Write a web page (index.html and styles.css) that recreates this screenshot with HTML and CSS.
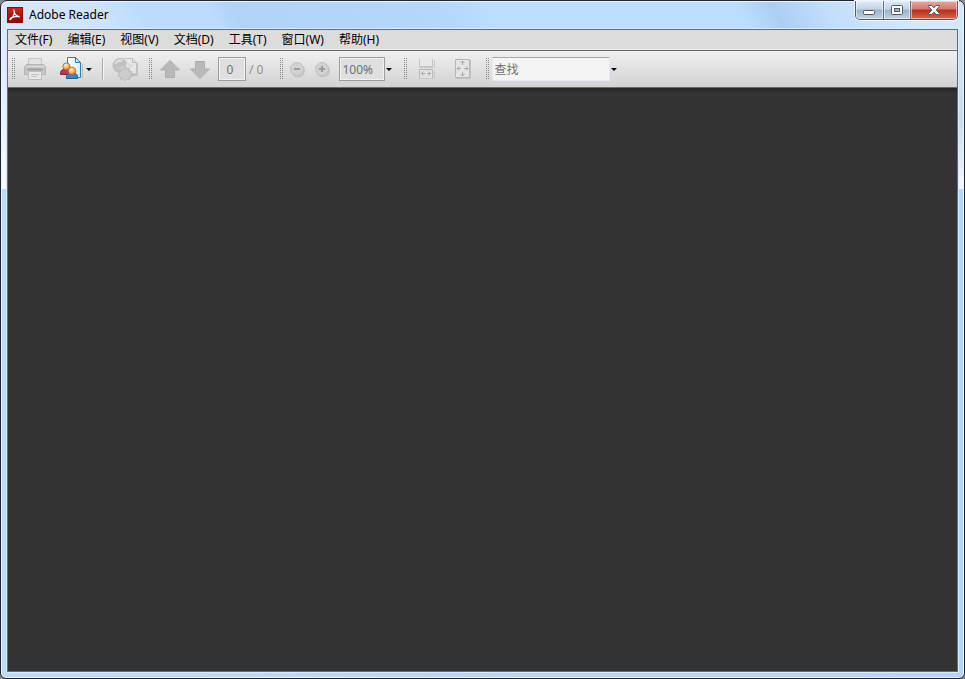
FILE: index.html
```html
<!DOCTYPE html>
<html lang="zh-CN">
<head>
    <meta charset="UTF-8">
    <meta name="viewport" content="width=device-width, initial-scale=1.0">
    <title>Adobe Reader</title>
    <link rel="stylesheet" href="styles.css">
</head>
<body>
    <div class="window">
        <header class="titlebar">
            <svg class="logo" width="16" height="16" viewBox="0 0 16 16">
                <defs>
                    <linearGradient id="red" x1="0" y1="0" x2="0" y2="1">
                        <stop offset="0" stop-color="#d5241c"/>
                        <stop offset="1" stop-color="#8c0404"/>
                    </linearGradient>
                </defs>
                <rect x=".5" y=".5" width="15" height="15" fill="url(#red)" stroke="#8a0b08"/>
                <path d="M6.800 2.500C6.900 5 8 8.500 12.600 10.300M7.300 4C7.500 8 5 12 3 12.600c-.6-1.500 3.500-3.400 9.500-3.200" fill="none" stroke="#fff" stroke-width="1.200"/>
            </svg>
            <h1>Adobe Reader</h1>
            <div class="controls">
                <button class="minimize" aria-label="最小化">
                    <svg width="13" height="6" viewBox="0 0 13 6"><rect x=".5" y=".5" width="11" height="4" rx="1" fill="#fff" stroke="#535666"/></svg>
                </button>
                <button class="maximize" aria-label="最大化">
                    <svg width="13" height="10" viewBox="0 0 13 10"><rect x=".5" y=".5" width="11" height="9" rx="1" fill="#fff" stroke="#535666"/><rect x="3.500" y="3.500" width="5" height="3" fill="#9eb7d2" stroke="#535666"/></svg>
                </button>
                <button class="close" aria-label="关闭">
                    <svg width="12" height="10" viewBox="0 0 12 10"><path d="M.6.5h3.200L6 2.800 8.200.5h3.200v1L8.200 5l3.200 3.500v1H8.200L6 7.200 3.800 9.500H.6v-1L3.800 5 .6 1.500z" fill="#fff" stroke="#535666"/></svg>
                </button>
            </div>
        </header>

        <main class="client">
            <nav class="menubar">
                <button>文件(F)</button>
                <button>编辑(E)</button>
                <button>视图(V)</button>
                <button>文档(D)</button>
                <button>工具(T)</button>
                <button>窗口(W)</button>
                <button>帮助(H)</button>
            </nav>

            <div class="toolbar">
                <div class="group file-group">
                    <span class="grip"></span>
                    <button class="tool print" aria-label="打印" disabled>
                        <svg width="24" height="24" viewBox="0 0 24 24">
                            <path d="M5.500 8.500v-7h13v7" fill="#e2e2e2" stroke="#c6c6c6"/>
                            <path d="M1.500 17.500v-8l2-2h17l2 2v8z" fill="#c6c6c6" stroke="#b6b6b6"/>
                            <path d="M3 9.500h18" stroke="#dedede"/>
                            <path d="M4 12.500h16" stroke="#a0a0a0" stroke-width="2"/>
                            <path d="M5.500 14.500h13v8h-13z" fill="#e8e8e8" stroke="#bcbcbc"/>
                            <path d="M8 17.500h8M8 19.500h6" stroke="#c2c2c2"/>
                        </svg>
                    </button>
                    <button class="tool share" aria-label="协作">
                        <svg width="24" height="24" viewBox="0 0 24 24">
                            <defs>
                                <radialGradient id="face" cx=".4" cy=".3" r=".8">
                                    <stop offset="0" stop-color="#fff0c8"/>
                                    <stop offset=".5" stop-color="#f3b660"/>
                                    <stop offset="1" stop-color="#b96a1b"/>
                                </radialGradient>
                                <linearGradient id="page" x1="0" y1="0" x2="1" y2="1">
                                    <stop offset="0" stop-color="#fff"/>
                                    <stop offset="1" stop-color="#cfe6f8"/>
                                </linearGradient>
                            </defs>
                            <path d="M22.500 7v14" stroke="#bdbdbd"/>
                            <path d="M7.500.5h8l5 5v15h-13z" fill="url(#page)" stroke="#2380be"/>
                            <path d="M15.500.5v5h5z" fill="#c7e4f8" stroke="#2380be"/>
                            <path d="M.5 17.500v-2c0-2 2-3 4-3h4c2 0 3 1 3 3v2z" fill="#c5305b" stroke="#8e1d40"/>
                            <circle cx="6.500" cy="9.500" r="3.600" fill="url(#face)" stroke="#a86422" stroke-width=".8"/>
                            <path d="M6.500 21.500v-2c0-2 1.500-3 3.500-3h4c2 0 3.500 1 3.500 3v2z" fill="#2989c9" stroke="#17609a"/>
                            <circle cx="12" cy="14" r="3.800" fill="url(#face)" stroke="#a86422" stroke-width=".8"/>
                        </svg>
                    </button>
                    <button class="drop" aria-label="协作选项"></button>
                    <span class="divider"></span>
                    <button class="tool web" aria-label="网络服务" disabled>
                        <svg width="28" height="24" viewBox="0 0 28 24">
                            <path d="M25 6v12H14" fill="none" stroke="#c0c0c0" stroke-width="2"/>
                            <path d="M11.500 1.500h9l4 4v11h-13z" fill="#e6e6e6" stroke="#c4c4c4"/>
                            <path d="M20.500 1.500v4h4" fill="#ddd" stroke="#bcbcbc"/>
                            <circle cx="8" cy="8.500" r="7" fill="#c2c2c2" stroke="#bababa"/>
                            <path d="M2 7c1-4 5-5 7-5 2 0 3 2 0 3-3 0-4 2-7 2z" fill="#dcdcdc"/>
                            <path d="M4 9c3 3 7 2 10-1V5l6 4-6 4v-2c-4 2-8 2-10-2z" fill="#e0e0e0" stroke="#c4c4c4" stroke-width=".5"/>
                            <path d="M13 9.500l1.500 2.700 2.600-.7.200 2.700 2.700.6-1.300 2.400 1.600 2.100-2.500 1.100-.3 2-2.300-.3L13 23.500l-1.700-1.500-2.700.3-.2-2.300-2.500-.9 1.500-1.900-1.300-2.400 2.600-.6.400-2.600 2.500.9z" fill="#cbcbcb" stroke="#bababa"/>
                        </svg>
                    </button>
                </div>

                <div class="group page-group">
                    <span class="grip"></span>
                    <button class="tool up" aria-label="上一页" disabled>
                        <svg width="22" height="22" viewBox="0 0 22 22"><path d="M11 2.500l9.500 9.500h-5v7.500h-9V12h-5z" fill="#b9b9b9" stroke="#afafaf"/></svg>
                    </button>
                    <button class="tool down" aria-label="下一页" disabled>
                        <svg width="22" height="22" viewBox="0 0 22 22"><path d="M11 20.500L1.500 11h5V3.500h9V11h5z" fill="#b9b9b9" stroke="#afafaf"/></svg>
                    </button>
                    <label class="page-number"><input class="field" type="text" value="0" aria-label="页码" disabled><span>/ 0</span></label>
                </div>

                <div class="group zoom-group">
                    <span class="grip"></span>
                    <button class="tool zoom-out" aria-label="缩小" disabled>
                        <svg width="17" height="17" viewBox="0 0 17 17"><circle cx="9" cy="9.500" r="7" fill="#c5c5c5"/><circle cx="8" cy="8" r="6.500" fill="#d2d2d2" stroke="#c2c2c2"/><path d="M5 8h6" stroke="#9c9c9c" stroke-width="2"/></svg>
                    </button>
                    <button class="tool zoom-in" aria-label="放大" disabled>
                        <svg width="17" height="17" viewBox="0 0 17 17"><circle cx="9" cy="9.500" r="7" fill="#c5c5c5"/><circle cx="8" cy="8" r="6.500" fill="#d2d2d2" stroke="#c2c2c2"/><path d="M5 8h6M8 5v6" stroke="#9c9c9c" stroke-width="2"/></svg>
                    </button>
                    <input class="field zoom-value" type="text" value="100%" aria-label="缩放比例" disabled>
                    <button class="drop" aria-label="选择缩放比例"></button>
                </div>

                <div class="group fit-group">
                    <span class="grip"></span>
                    <button class="tool fit-width" aria-label="适合宽度" disabled>
                        <svg width="18" height="22" viewBox="0 0 18 22">
                            <path d="M1 9.500h15.500V2M1 20.500h15.500V13" fill="none" stroke="#c9c9c9"/>
                            <path d="M1.500 1v7.500h13V1" fill="#e8e8e8" stroke="#c2c2c2"/>
                            <path d="M1.500 20v-8.500h13V20" fill="#e2e2e2" stroke="#b6b6b6"/>
                            <path d="M3 15.500h4M9 15.500h4M5.500 13.500l-2 2 2 2M10.500 13.500l2 2-2 2" fill="none" stroke="#a8a8a8"/>
                        </svg>
                    </button>
                    <button class="tool fit-page" aria-label="适合页面" disabled>
                        <svg width="18" height="22" viewBox="0 0 18 22">
                            <path d="M2 20.500h14.500V2" fill="none" stroke="#c4c4c4"/>
                            <path d="M1.500 1.500h14v18h-14z" fill="#e4e4e4" stroke="#b6b6b6"/>
                            <path d="M8.500 3v4M8.500 14v4M3 10.500h4M10 10.500h4M6.500 5l2-2 2 2M6.500 16l2 2 2-2M5 8.500l-2 2 2 2M12 8.500l2 2-2 2" fill="none" stroke="#a8a8a8"/>
                        </svg>
                    </button>
                </div>

                <div class="group find-group">
                    <span class="grip"></span>
                    <input class="find" type="text" placeholder="查找" aria-label="查找">
                    <button class="drop" aria-label="查找选项"></button>
                </div>
            </div>

            <section class="document"></section>
        </main>
    </div>
</body>
</html>
```

FILE: styles.css
```css
* { box-sizing: border-box; }
body { margin: 0; background: #8a8a8a; font-family: "Noto Sans", "Noto Sans CJK SC", sans-serif; font-size: 12px; color: #000; }
button, input { font: inherit; color: inherit; padding: 0; margin: 0; border: none; background: none; }
svg { display: block; }

/* window frame */
.window {
    display: flex;
    flex-direction: column;
    height: 100vh;
    padding: 0 5px 5px;
    border: 1px solid #20242e;
    border-radius: 7px 7px 6px 6px;
    box-shadow: inset 0 0 0 1px #eef7ff;
    background:
        linear-gradient(60deg, #d6e8fb 0, #cfe4fb 90px, #bbdcfd 130px, #bbdcfd 190px, #b0d3f6 210px, #b4d7fa 390px, #bbddfe 430px, #bbddfe 650px, #abcff3 680px, #c4dffa 730px, #d4e8fc 800px) top / 100% 30px no-repeat,
        linear-gradient(#d6e8fb, #e5effa 100px, #f8fbff 188px, transparent 188px) left / 8px 100% no-repeat,
        linear-gradient(#d6e8fb, #c8dcf0 120px, #f4f9ff 188px, transparent 188px) right / 8px 100% no-repeat,
        linear-gradient(90deg, #b9dbfc, #b2d5f9);
}

.titlebar { display: flex; height: 28px; padding-top: 6px; }
.logo { margin: 0 6px 0 1px; }
.titlebar h1 { margin: 0; font-size: 12px; line-height: 16px; font-weight: normal; }

.controls { display: flex; height: 19px; margin: -6px 1px 0 auto; border: 1px solid #535b6a; border-top: none; border-radius: 0 0 5px 5px; box-shadow: 0 0 0 1px #eaf5ff; overflow: hidden; }
.controls button { display: flex; justify-content: center; align-items: center; border-right: 1px solid #646e7d; background: linear-gradient(#dce8f4, #c5d5e6 45%, #9db3ca 50%, #bfd3e8); box-shadow: inset 0 0 0 1px rgba(255, 255, 255, .5); }
.controls .minimize { width: 28px; padding-top: 6px; }
.controls .maximize { width: 27px; }
.controls .close { width: 46px; border: none; background: linear-gradient(#e5a99e, #d4796b 45%, #b82e1b 50%, #d5664b); }

.client { flex: 1; display: flex; flex-direction: column; margin: 0 1px 1px; border: 1px solid #5e6c7c; min-height: 0; outline: 1px solid #d9ecff; }

.menubar { display: flex; gap: 1px; height: 21px; background: #dcdcdc; border-bottom: 1px solid #666; box-shadow: inset 0 -1px #eee; }
.menubar button { padding: 0 7px; line-height: 18px; }

/* toolbar */
.toolbar { display: flex; align-items: center; height: 37px; padding-left: 3px; background: linear-gradient(#f0f0f0, #d2d2d2); border-bottom: 1px solid #6b6b6b; }
.group { display: flex; align-items: center; }
.grip { width: 4px; height: 22px; background: repeating-conic-gradient(#888 0 25%, transparent 0 100%) 0 0 / 2px 2px; }
.tool { flex: none; }
.drop { width: 6px; height: 24px; }
.drop::before { content: ""; display: block; width: 0; margin: 1px auto 0; border: 3px solid transparent; border-top-color: #000; border-bottom: none; }
.divider { width: 2px; height: 22px; border-left: 1px solid #aaa; border-right: 1px solid #f4f4f4; }
.print { margin-left: 8px; }
.share { margin: 0 2px 0 13px; }
.file-group .divider { margin-left: 10px; }
.web { margin-left: 8px; }

.page-group { margin-left: 8px; }
.up { margin-left: 7px; }
.down { margin-left: 8px; }
.page-number { display: flex; align-items: center; margin-left: 7px; color: #909090; }
.page-number span { margin-left: 3px; }
.page-number .field { width: 28px; padding-right: 4px; text-align: center; }
.field { height: 24px; border: 1px solid #9c9c9c; box-shadow: inset 0 0 0 1px #f2f2f2; background: #dfdfdf; color: #707070; }

.zoom-group { margin-left: 16px; }
.zoom-out { margin-left: 6px; }
.zoom-in { margin-left: 8px; }
.zoom-value { width: 46px; padding-left: 2px; margin: 0 1px 0 8px; }

.fit-group { margin-left: 11px; }
.fit-width { margin-left: 11px; }
.fit-page { margin-left: 18px; }

.find-group { margin-left: 13px; }
.find { width: 118px; height: 24px; margin: 0 1px 0 3px; padding-left: 1px; border: 1px solid #e2eaf3; border-top-color: #a8a8a8; background: #f4f4f4; }
.find::placeholder { color: #707070; opacity: 1; }

.document { flex: 1; background: linear-gradient(#242424, #333 5px); }
```
